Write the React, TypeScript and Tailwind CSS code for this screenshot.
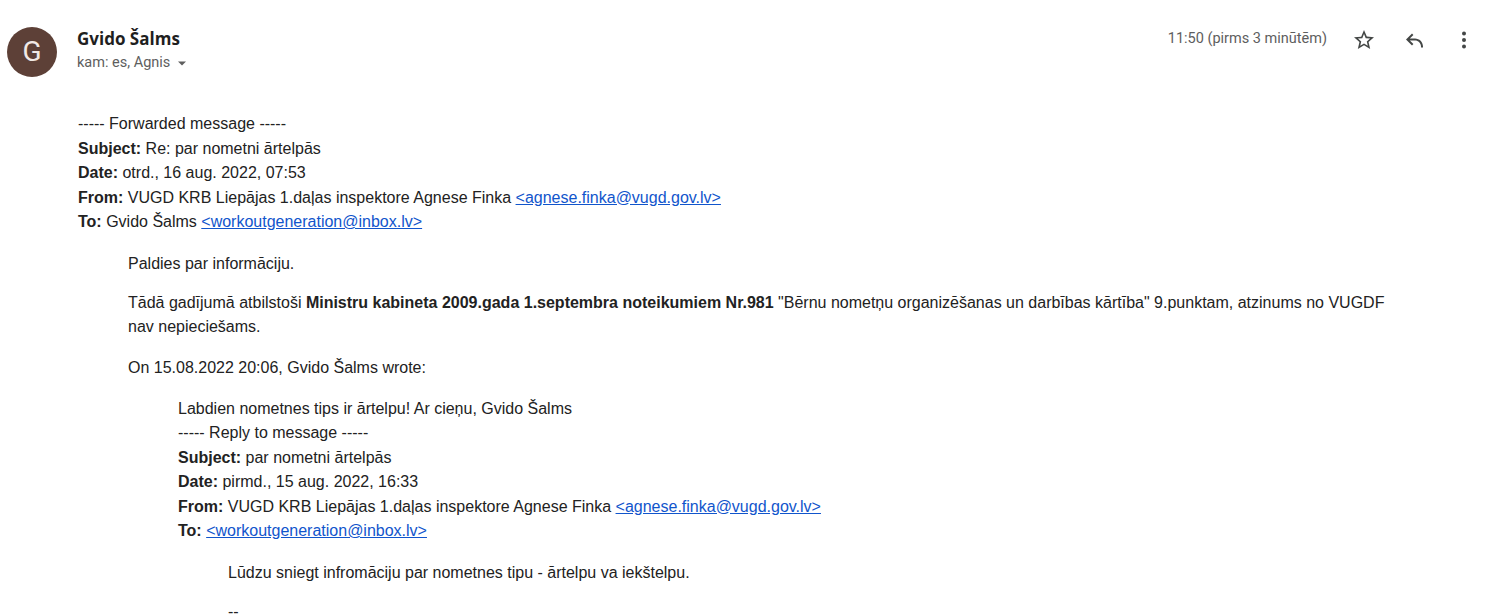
import React from 'react';

const Link: React.FC<{ children: React.ReactNode }> = ({ children }) => (
  <a href="#" className="text-[#1155cc] underline">{children}</a>
);

const StarIcon = () => (
  <svg width="24" height="24" viewBox="0 0 24 24" fill="#444746">
    <path d="M22 9.24l-7.19-.62L12 2 9.19 8.63 2 9.24l5.46 4.73L5.82 21 12 17.27 18.18 21l-1.63-7.03L22 9.24zM12 15.4l-3.76 2.27 1-4.28-3.32-2.88 4.38-.38L12 6.1l1.71 4.04 4.38.38-3.32 2.88 1 4.28L12 15.4z" />
  </svg>
);

const ReplyIcon = () => (
  <svg width="24" height="24" viewBox="0 0 24 24" fill="#444746">
    <path d="M19 18.5c0-3.3-2.7-6-6-6H7.83l3.59 3.59L10 17.5l-6-6 6-6 1.41 1.41L7.83 10.5H13c4.42 0 8 3.58 8 8v1h-2v-1z" />
  </svg>
);

const DotsIcon = () => (
  <svg width="24" height="24" viewBox="0 0 24 24" fill="#444746">
    <circle cx="12" cy="5.5" r="2" />
    <circle cx="12" cy="12" r="2" />
    <circle cx="12" cy="18.5" r="2" />
  </svg>
);

export default function App() {
  return (
    <div className="w-[1493px] h-[615px] overflow-hidden bg-white font-['Liberation_Sans',Arial,sans-serif] text-[16px] text-[#222]">
      {/* header */}
      <div className="flex pl-[7px] pr-[17px] pt-[27px]">
        <div className="w-[50px] h-[50px] rounded-full bg-[#5d4037] flex items-center justify-center text-[#f1e9e6] text-[28px] font-['Roboto',sans-serif] shrink-0">
          G
        </div>
        <div className="ml-[20px] pt-[1px]">
          <div className="text-[17px] font-bold text-[#1f1f1f] leading-[22px] font-['Open_Sans',sans-serif]">Gvido Šalms</div>
          <div className="flex items-center text-[14.5px] text-[#5e5e5e] mt-[3px] leading-[20px] font-['Roboto',sans-serif]">
            kam: es, Agnis
            <svg width="20" height="20" viewBox="0 0 20 20" className="ml-[2px]" fill="#5e5e5e">
              <path d="M6 8.5h8l-4 4z" />
            </svg>
          </div>
        </div>
        <div className="ml-auto flex items-start font-['Roboto',sans-serif]">
          <span className="text-[14.5px] text-[#5e5e5e] mt-[2px] leading-[20px]">11:50 (pirms 3 minūtēm)</span>
          <div className="ml-[25px] flex gap-[26px] mt-[1px]">
            <StarIcon />
            <ReplyIcon />
            <DotsIcon />
          </div>
        </div>
      </div>

      {/* body */}
      <div className="pl-[78px] pr-[88px] pt-[35px] leading-[24.5px]">
        <div>----- Forwarded message -----</div>
        <div><b>Subject:</b> Re: par nometni ārtelpās</div>
        <div><b>Date:</b> otrd., 16 aug. 2022, 07:53</div>
        <div><b>From:</b> VUGD KRB Liepājas 1.daļas inspektore Agnese Finka <Link>&lt;agnese.finka@vugd.gov.lv&gt;</Link></div>
        <div><b>To:</b> Gvido Šalms <Link>&lt;workoutgeneration@inbox.lv&gt;</Link></div>

        <div className="pl-[50px] pt-[17px]">
          <p className="leading-[24px]">Paldies par informāciju.</p>
          <p className="mt-[15px] leading-[24px]">
            Tādā gadījumā atbilstoši <b>Ministru kabineta 2009.gada 1.septembra noteikumiem Nr.981</b> "Bērnu nometņu organizēšanas un darbības kārtība" 9.punktam, atzinums no VUGDF nav nepieciešams.
          </p>
          <p className="mt-[17px] leading-[24px]">On 15.08.2022 20:06, Gvido Šalms wrote:</p>

          <div className="pl-[50px] pt-[17px]">
            <div>Labdien nometnes tips ir ārtelpu! Ar cieņu, Gvido Šalms</div>
            <div>----- Reply to message -----</div>
            <div><b>Subject:</b> par nometni ārtelpās</div>
            <div><b>Date:</b> pirmd., 15 aug. 2022, 16:33</div>
            <div><b>From:</b> VUGD KRB Liepājas 1.daļas inspektore Agnese Finka <Link>&lt;agnese.finka@vugd.gov.lv&gt;</Link></div>
            <div><b>To:</b> <Link>&lt;workoutgeneration@inbox.lv&gt;</Link></div>

            <div className="pl-[50px] pt-[17px]">
              <p className="leading-[24px]">Lūdzu sniegt infromāciju par nometnes tipu - ārtelpu va iekštelpu.</p>
              <p className="mt-[15px] leading-[24px]">--</p>
            </div>
          </div>
        </div>
      </div>
    </div>
  );
}
